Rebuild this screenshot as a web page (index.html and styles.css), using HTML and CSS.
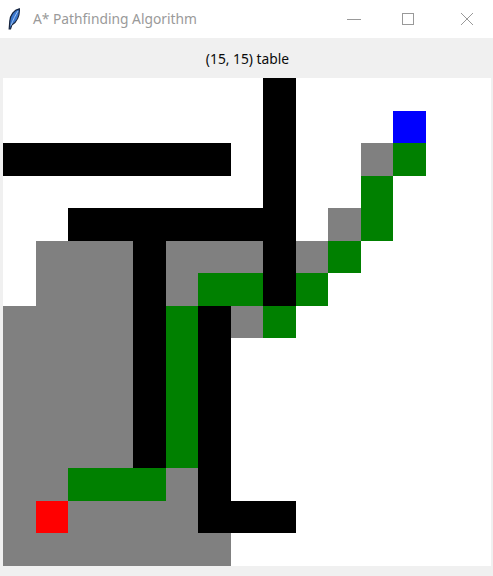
FILE: index.html
```html
<!DOCTYPE html>
<html>
<head>
<meta charset="utf-8">
<link rel="stylesheet" href="styles.css">
</head>
<body>
<div class="window">
  <div class="titlebar">
    <svg class="feather" width="12" height="22" viewBox="0 0 12 22">
      <path d="M11.3 0.8 C6 1.8 2.2 7 1.8 13 L1.2 21 L2.5 21 L3.8 17 C9 14 11.8 7.5 11.3 0.8 Z" fill="#3a76cc" stroke="#15233d" stroke-width="1.2"/>
      <path d="M10 3 C7.5 7 5.2 11.5 3 17.5" fill="none" stroke="#a9cdf5" stroke-width="0.9"/>
    </svg>
    <span class="title">A* Pathfinding Algorithm</span>
    <div class="controls">
      <svg class="ctl min" width="16" height="16" viewBox="0 0 16 16"><path d="M1 8.5 H15" stroke="#999" stroke-width="1"/></svg>
      <svg class="ctl max" width="16" height="16" viewBox="0 0 16 16"><rect x="2.5" y="2.5" width="11" height="11" fill="none" stroke="#999" stroke-width="1"/></svg>
      <svg class="ctl close" width="16" height="16" viewBox="0 0 16 16"><path d="M2 2 L14 14 M14 2 L2 14" stroke="#999" stroke-width="1"/></svg>
    </div>
  </div>
  <div class="label">(15, 15) table</div>
  <div class="canvas-wrap">
    <div class="grid">
      <div></div><div></div><div></div><div></div><div></div><div></div><div></div><div></div><div class="k"></div><div></div><div></div><div></div><div></div><div></div><div></div>
      <div></div><div></div><div></div><div></div><div></div><div></div><div></div><div></div><div class="k"></div><div></div><div></div><div></div><div class="b"></div><div></div><div></div>
      <div class="k"></div><div class="k"></div><div class="k"></div><div class="k"></div><div class="k"></div><div class="k"></div><div class="k"></div><div></div><div class="k"></div><div></div><div></div><div class="g"></div><div class="G"></div><div></div><div></div>
      <div></div><div></div><div></div><div></div><div></div><div></div><div></div><div></div><div class="k"></div><div></div><div></div><div class="G"></div><div></div><div></div><div></div>
      <div></div><div></div><div class="k"></div><div class="k"></div><div class="k"></div><div class="k"></div><div class="k"></div><div class="k"></div><div class="k"></div><div></div><div class="g"></div><div class="G"></div><div></div><div></div><div></div>
      <div></div><div class="g"></div><div class="g"></div><div class="g"></div><div class="k"></div><div class="g"></div><div class="g"></div><div class="g"></div><div class="k"></div><div class="g"></div><div class="G"></div><div></div><div></div><div></div><div></div>
      <div></div><div class="g"></div><div class="g"></div><div class="g"></div><div class="k"></div><div class="g"></div><div class="G"></div><div class="G"></div><div class="k"></div><div class="G"></div><div></div><div></div><div></div><div></div><div></div>
      <div class="g"></div><div class="g"></div><div class="g"></div><div class="g"></div><div class="k"></div><div class="G"></div><div class="k"></div><div class="g"></div><div class="G"></div><div></div><div></div><div></div><div></div><div></div><div></div>
      <div class="g"></div><div class="g"></div><div class="g"></div><div class="g"></div><div class="k"></div><div class="G"></div><div class="k"></div><div></div><div></div><div></div><div></div><div></div><div></div><div></div><div></div>
      <div class="g"></div><div class="g"></div><div class="g"></div><div class="g"></div><div class="k"></div><div class="G"></div><div class="k"></div><div></div><div></div><div></div><div></div><div></div><div></div><div></div><div></div>
      <div class="g"></div><div class="g"></div><div class="g"></div><div class="g"></div><div class="k"></div><div class="G"></div><div class="k"></div><div></div><div></div><div></div><div></div><div></div><div></div><div></div><div></div>
      <div class="g"></div><div class="g"></div><div class="g"></div><div class="g"></div><div class="k"></div><div class="G"></div><div class="k"></div><div></div><div></div><div></div><div></div><div></div><div></div><div></div><div></div>
      <div class="g"></div><div class="g"></div><div class="G"></div><div class="G"></div><div class="G"></div><div class="g"></div><div class="k"></div><div></div><div></div><div></div><div></div><div></div><div></div><div></div><div></div>
      <div class="g"></div><div class="r"></div><div class="g"></div><div class="g"></div><div class="g"></div><div class="g"></div><div class="k"></div><div class="k"></div><div class="k"></div><div></div><div></div><div></div><div></div><div></div><div></div>
      <div class="g"></div><div class="g"></div><div class="g"></div><div class="g"></div><div class="g"></div><div class="g"></div><div class="g"></div><div></div><div></div><div></div><div></div><div></div><div></div><div></div><div></div>
    </div>
  </div>
</div>
</body>
</html>
```
FILE: styles.css
```css
html, body {
  margin: 0;
  padding: 0;
  background: #f0f0f0;
  width: 493px;
  height: 576px;
  overflow: hidden;
}
.window {
  display: flex;
  flex-direction: column;
}
.titlebar {
  height: 38px;
  background: #ffffff;
  display: flex;
  align-items: center;
}
.feather {
  margin-left: 8px;
  margin-right: 13px;
}
.title {
  font-family: "Noto Sans", "Open Sans", sans-serif;
  font-size: 13.8px;
  color: #9a9a9a;
  margin-top: -1px;
}
.controls {
  margin-left: auto;
  display: flex;
  align-items: center;
  margin-right: 18.5px;
}
.max {
  margin-left: 38px;
}
.close {
  margin-left: 43px;
}
.label {
  height: 40px;
  background: #f0f0f0;
  display: flex;
  align-items: center;
  justify-content: center;
  font-family: "Noto Sans", "Open Sans", sans-serif;
  font-size: 13.8px;
  color: #0a0a0a;
  padding-left: 2px;
}
.canvas-wrap {
  padding-left: 3px;
}
.grid {
  display: grid;
  grid-template-columns: repeat(15, 32.5px);
  grid-template-rows: repeat(15, 32.5px);
  width: 487.5px;
  height: 487.5px;
  background: #ffffff;
}
.k { background: #000000; }
.g { background: #808080; }
.G { background: #008000; }
.r { background: #ff0000; }
.b { background: #0000ff; }
```
